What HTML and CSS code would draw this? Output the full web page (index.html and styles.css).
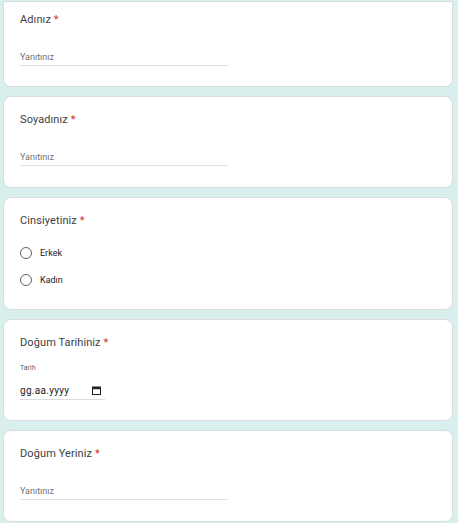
FILE: index.html
```html
<!DOCTYPE html>
<html lang="tr">
<head>
<meta charset="utf-8">
<link rel="stylesheet" href="styles.css">
</head>
<body>
<div class="page">
  <div class="card card-first">
    <div class="title">Adınız <span class="req">*</span></div>
    <div class="text-input">Yanıtınız</div>
  </div>
  <div class="card">
    <div class="title">Soyadınız <span class="req">*</span></div>
    <div class="text-input">Yanıtınız</div>
  </div>
  <div class="card card-radio">
    <div class="title">Cinsiyetiniz <span class="req">*</span></div>
    <div class="options">
      <div class="option"><span class="radio"></span><span class="opt-label">Erkek</span></div>
      <div class="option"><span class="radio"></span><span class="opt-label">Kadın</span></div>
    </div>
  </div>
  <div class="card card-date">
    <div class="title">Doğum Tarihiniz <span class="req">*</span></div>
    <div class="date-label">Tarih</div>
    <div class="date-input">
      <span class="date-text">gg.aa.yyyy</span>
      <svg class="cal" width="9" height="9" viewBox="0 0 9 9"><rect x="0.5" y="1" width="8" height="7.5" fill="none" stroke="#202124" stroke-width="1"/><rect x="0.5" y="1" width="8" height="2.2" fill="#202124"/></svg>
    </div>
  </div>
  <div class="card">
    <div class="title">Doğum Yeriniz <span class="req">*</span></div>
    <div class="text-input">Yanıtınız</div>
  </div>
</div>
</body>
</html>
```

FILE: styles.css
```css
html, body {
  margin: 0;
  padding: 0;
  background: #d9efed;
}
body {
  font-family: Roboto, "Liberation Sans", Arial, sans-serif;
  color: #202124;
}
.page {
  display: flex;
  flex-direction: column;
  gap: 9px;
  padding: 1px 5px 0 3px;
}
.card {
  flex-shrink: 0;
  background: #fff;
  border: 1px solid #dadce0;
  border-radius: 8px;
  padding: 16px 16px 0 16px;
  height: 92px;
  box-sizing: border-box;
}
.card-first {
  height: 86px;
  border-top-left-radius: 0;
  border-top-right-radius: 0;
  padding-top: 11px;
}
.card-radio {
  height: 113px;
}
.card-date {
  height: 102px;
}
.title {
  font-size: 11px;
  line-height: 14px;
  letter-spacing: 0.1px;
  color: #3c4043;
}
.req {
  color: #d93025;
}
.text-input {
  margin-top: 24px;
  width: 208px;
  font-size: 9px;
  line-height: 12px;
  color: #70757a;
  padding-bottom: 2px;
  border-bottom: 1px solid #e0e0e0;
}
.options {
  margin-top: 18px;
  display: flex;
  flex-direction: column;
  gap: 13px;
}
.option {
  display: flex;
  align-items: center;
  gap: 8px;
}
.radio {
  width: 10px;
  height: 10px;
  border: 1.5px solid #5f6368;
  border-radius: 50%;
}
.opt-label {
  font-size: 9px;
  line-height: 14px;
  color: #202124;
}
.date-label {
  margin-top: 13px;
  font-size: 7px;
  line-height: 10px;
  color: #5f6368;
}
.date-input {
  margin-top: 11px;
  width: 85px;
  display: flex;
  align-items: center;
  justify-content: space-between;
  padding: 0 4px 2px 0;
  border-bottom: 1px solid #dadce0;
  box-sizing: border-box;
}
.date-text {
  font-size: 10px;
  line-height: 13px;
  letter-spacing: 0.3px;
}
.cal {
  display: block;
}
```
